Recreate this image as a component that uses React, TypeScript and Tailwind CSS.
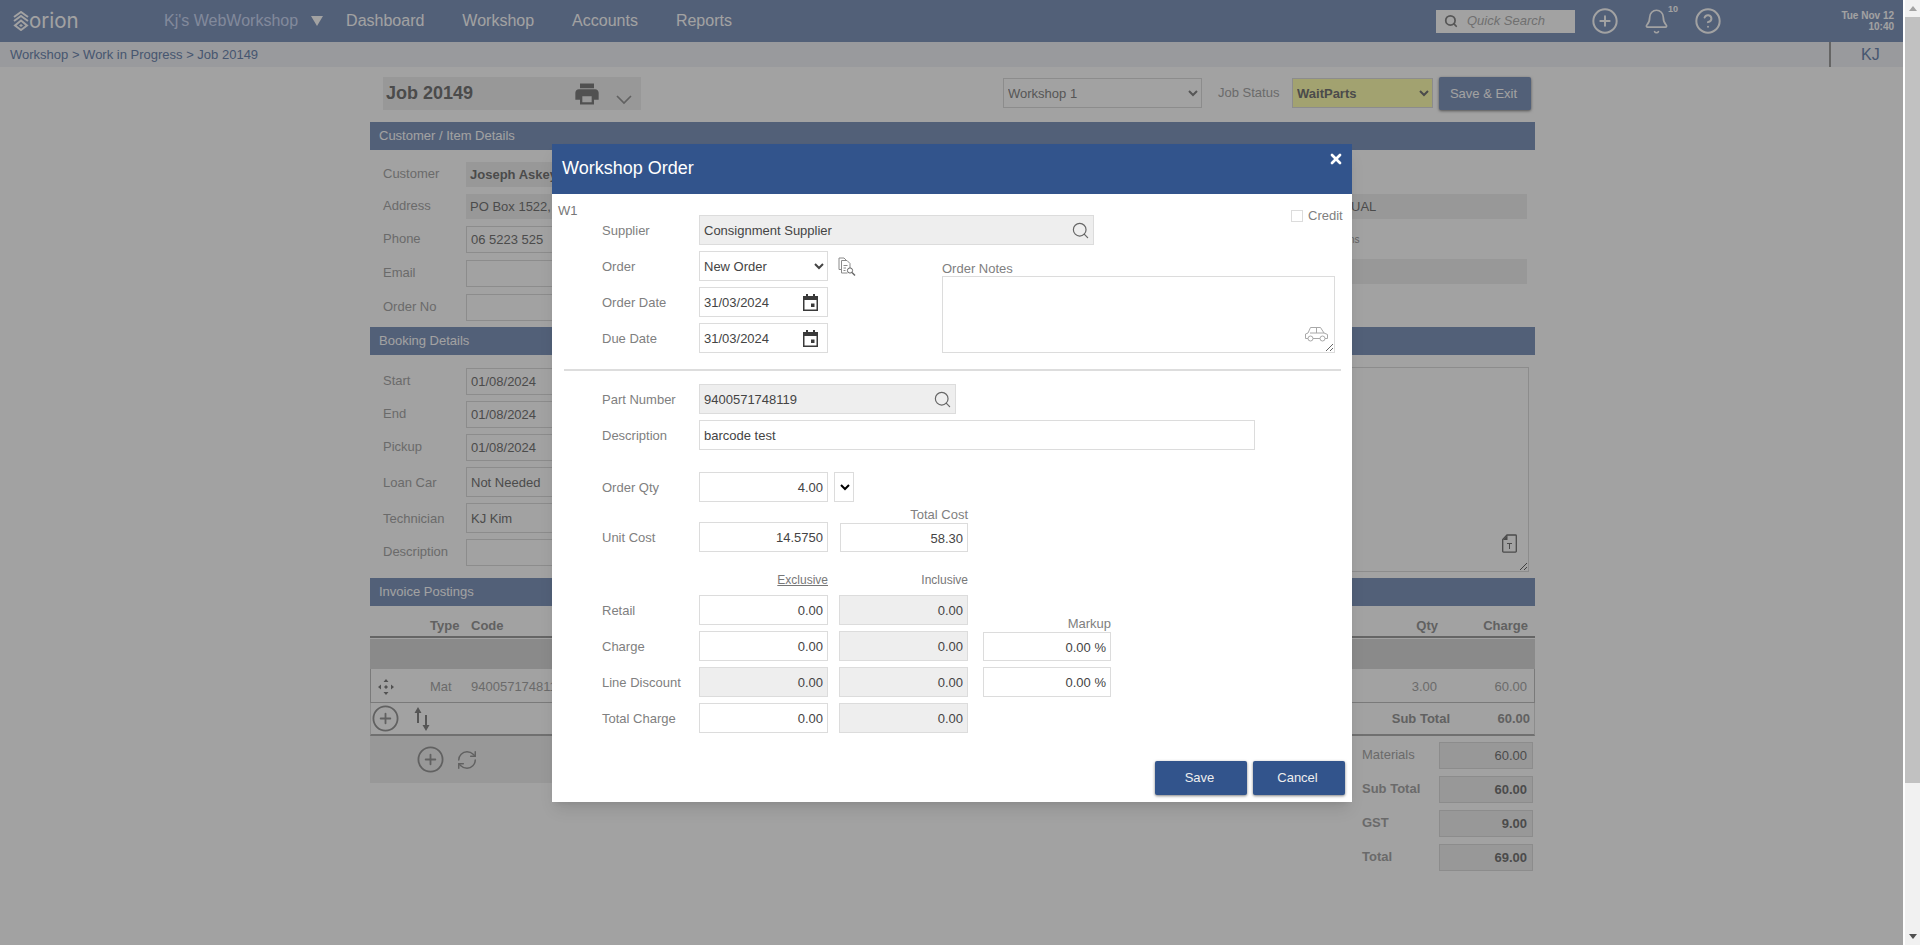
import React from 'react';
import { Bell, CircleHelp, CirclePlus, RefreshCw, Search, X } from 'lucide-react';

const Logo = () => (
  <svg width="16" height="20" viewBox="0 0 16 20" fill="none" stroke="#ffffff" strokeWidth="2">
    <path d="M1 6 L8 1 L15 6" />
    <path d="M1 10 L8 5 L15 10" />
    <path d="M8 9.500 L14 14.500 L8 19 L2 14.500 Z" />
    <path d="M8 13 L10 14.500 L8 16 L6 14.500 Z" fill="#ffffff" stroke="none" />
  </svg>
);

const Printer = () => (
  <svg width="28" height="28" viewBox="0 0 24 24" fill="#808080">
    <path d="M19 8H5c-1.66 0-3 1.34-3 3v6h4v4h12v-4h4v-6c0-1.66-1.34-3-3-3zm-3 11H8v-5h8v5zm-10-16h12v4H6z" />
  </svg>
);

const Calendar = () => (
  <svg width="15" height="17" viewBox="0 0 15 17" fill="none" className="-mt-[2px]">
    <path d="M3 0h2v2h5V0h2v2h3v15H0V2h3z" fill="#3a3a3a" />
    <rect x="1.500" y="6" width="12" height="9.500" fill="#fff" />
    <rect x="8" y="9.500" width="3.500" height="3.500" fill="#3a3a3a" />
  </svg>
);

const DocSearch = () => (
  <svg width="18" height="19" viewBox="0 0 18 19" fill="none" stroke="#8a8a8a" strokeWidth="1">
    <path d="M3.500 12.500H1V1h5l2 2" />
    <path d="M3.500 3.500h5.500l3 3v4.500M3.500 3.500v12.500h6" />
    <path d="M5.500 8.500h4M5.500 11h2.500M5.500 13.500h2" />
    <circle cx="12" cy="13.500" r="2.600" stroke="#666" />
    <path d="M14 15.500l3 3" stroke="#666" strokeWidth="1.400" />
  </svg>
);

const Car = () => (
  <svg width="25" height="16" viewBox="0 0 25 16" fill="none" stroke="#a8a8a8" strokeWidth="1">
    <path d="M4 12.500H1.500V8L4 7l2.500-5.500h10L20 7l3.500 1.500v4H21M16 12.500H9" />
    <path d="M6 7h14M12.500 1.500V7" />
    <circle cx="6.500" cy="12.500" r="2.500" />
    <circle cx="18.500" cy="12.500" r="2.500" />
  </svg>
);

const MoveIcon = () => (
  <svg width="16" height="16" viewBox="0 0 16 16" fill="#808080">
    <path d="M8 0l2.500 3h-5zM8 16l-2.500-3h5zM0 8l3-2.500v5zM16 8l-3 2.500v-5z" />
    <path d="M8 6l2 2-2 2-2-2z" />
  </svg>
);

const SortIcon = () => (
  <svg width="18" height="24" viewBox="0 0 18 24" fill="#888">
    <path d="M5 0l3.500 6H6v10H4V6H1.500z" />
    <path d="M13 24l-3.500-6H12V8h2v10h2.500z" />
  </svg>
);

const TextDoc = () => (
  <svg width="15" height="19" viewBox="0 0 15 19" fill="none" stroke="#777" strokeWidth="1.300">
    <path d="M5 1h8.500a.8.8 0 0 1 .8.800v15.500a.8.8 0 0 1-.8.800H1.500a.8.8 0 0 1-.8-.8V5.500z" />
    <path d="M1 6h4.500V1z" fill="#777" stroke="none" />
    <path d="M5 9.500h5M7.500 9.500v5.500" strokeWidth="1" />
  </svg>
);

// modal input look: 1px light border, optionally greyed, text left or right
function Field({ className = '', gray = false, right = false, children }: { className?: string; gray?: boolean; right?: boolean; children?: React.ReactNode }) {
  return (
    <div className={`flex h-[30px] shrink-0 items-center border border-[#dcdcdc] px-[4px] pt-[2px] text-[13px] text-[#444] ${gray ? 'bg-[#eeeeee]' : 'bg-white'} ${right ? 'justify-end' : ''} ${className}`}>
      {children}
    </div>
  );
}

function Row({ label, children, className = '' }: { label: string; children: React.ReactNode; className?: string }) {
  return (
    <div className={`flex items-center ${className}`}>
      <div className="w-[97px] shrink-0 pt-[2px] text-[13px] text-[#808080]">{label}</div>
      {children}
    </div>
  );
}

function SearchField({ className, children }: { className: string; children: React.ReactNode }) {
  return (
    <Field gray className={`justify-between pr-[3px] ${className}`}>
      <span>{children}</span>
      <Search size={19} strokeWidth={1.5} className="-mt-[2px] text-[#666]" />
    </Field>
  );
}

function WorkshopOrder() {
  return (
    <div className="absolute left-[552px] top-[144px] flex h-[658px] w-[800px] flex-col bg-white shadow-lg">
      <div className="flex h-[50px] shrink-0 items-start justify-between bg-[#32548c] pl-[10px] pr-[8px]">
        <div className="-mt-[2px] self-center text-[18px] text-white">Workshop Order</div>
        <X size={16} strokeWidth={4} className="mt-[7px] text-white" />
      </div>

      <div className="flex pl-[6px] pt-[21px]">
        <div className="-mt-[14px] w-[44px] shrink-0 text-[13px] text-[#777]">W1</div>
        <div className="flex-1">
          <div className="flex items-start">
            <Row label="Supplier">
              <SearchField className="w-[395px]">Consignment Supplier</SearchField>
            </Row>
            <div className="-mt-[9px] ml-[197px] flex items-center text-[13px] text-[#808080]">
              <div className="mr-[5px] h-[12px] w-[12px] border border-[#dcdcdc]" />
              Credit
            </div>
          </div>
          <div className="mt-[6px] flex">
            <div className="flex w-[340px] shrink-0 flex-col gap-[6px]">
              <Row label="Order">
                <select className="h-[30px] w-[129px] border border-[#dcdcdc] bg-white text-[13px] text-[#444]">
                  <option>New Order</option>
                </select>
                <div className="ml-[10px]"><DocSearch /></div>
              </Row>
              <Row label="Order Date">
                <Field className="w-[129px] justify-between pr-[9px]">31/03/2024<Calendar /></Field>
              </Row>
              <Row label="Due Date">
                <Field className="w-[129px] justify-between pr-[9px]">31/03/2024<Calendar /></Field>
              </Row>
            </div>
            <div className="w-[393px] pt-[10px]">
              <div className="h-[15px] text-[13px] leading-[16px] text-[#808080]">Order Notes</div>
              <div className="relative h-[77px]">
                <textarea className="block h-[77px] w-[393px] border border-[#dcdcdc] bg-white" />
                <div className="absolute bottom-[11px] right-[6px]"><Car /></div>
              </div>
            </div>
          </div>
        </div>
      </div>

      <div className="ml-[12px] mt-[16px] h-[2px] w-[777px] bg-[#dddddd]" />

      <div className="pl-[50px]">
        <Row label="Part Number" className="mt-[13px]">
          <SearchField className="w-[257px]">9400571748119</SearchField>
        </Row>
        <Row label="Description" className="mt-[6px]">
          <Field className="w-[556px]">barcode test</Field>
        </Row>
        <Row label="Order Qty" className="mt-[22px]">
          <Field right className="w-[129px]">4.00</Field>
          <select className="ml-[6px] h-[30px] w-[20px] border border-[#dcdcdc] bg-white text-[13px]">
            <option></option>
          </select>
        </Row>
        <div className="mt-[5px] flex h-[45px] items-end">
          <div className="flex h-[30px] w-[97px] items-center pt-[2px] text-[13px] text-[#808080]">Unit Cost</div>
          <Field right className="w-[129px]">14.5750</Field>
          <div className="ml-[12px] w-[128px]">
            <div className="text-right text-[13px] leading-[16px] text-[#808080]">Total Cost</div>
            <Field right className="!h-[29px] w-[128px]">58.30</Field>
          </div>
        </div>
        <div className="mt-[20px] flex text-[12px] leading-[16px] text-[#777]">
          <div className="w-[97px]" />
          <div className="w-[129px] text-right underline">Exclusive</div>
          <div className="ml-[11px] w-[129px] text-right">Inclusive</div>
        </div>
        <Row label="Retail" className="mt-[7px]">
          <Field right className="w-[129px]">0.00</Field>
          <Field gray right className="ml-[11px] w-[129px]">0.00</Field>
          <div className="-mb-[28px] ml-[15px] w-[128px] text-right text-[13px] leading-[16px] text-[#808080]">Markup</div>
        </Row>
        <Row label="Charge" className="mt-[6px]">
          <Field right className="w-[129px]">0.00</Field>
          <Field gray right className="ml-[11px] w-[129px]">0.00</Field>
          <Field right className="ml-[15px] mt-px !h-[29px] w-[128px]">0.00 %</Field>
        </Row>
        <Row label="Line Discount" className="mt-[6px]">
          <Field gray right className="w-[129px]">0.00</Field>
          <Field gray right className="ml-[11px] w-[129px]">0.00</Field>
          <Field right className="ml-[15px] w-[128px]">0.00 %</Field>
        </Row>
        <Row label="Total Charge" className="mt-[6px]">
          <Field right className="w-[129px]">0.00</Field>
          <Field gray right className="ml-[11px] w-[129px]">0.00</Field>
        </Row>
      </div>

      <div className="mt-[28px] flex justify-end gap-[6px] pr-[7px]">
        <button className="h-[34px] w-[92px] rounded-[2px] bg-[#32548c] pr-[3px] text-[13px] text-[#eeeeee] shadow-[0_1px_3px_rgba(0,0,0,0.5)]">Save</button>
        <button className="h-[34px] w-[92px] rounded-[2px] bg-[#32548c] pr-[3px] text-[13px] text-[#eeeeee] shadow-[0_1px_3px_rgba(0,0,0,0.5)]">Cancel</button>
      </div>
    </div>
  );
}

function SectionHead({ children }: { children: React.ReactNode }) {
  return <div className="flex h-[28px] items-center bg-[#8297be] pl-[9px] text-[13px] text-[#ffffff]">{children}</div>;
}

// page form row behind the dialog
function PageRow({ label, h, box = false, bold = false, children }: { label: string; h: string; box?: boolean; bold?: boolean; children?: React.ReactNode }) {
  const tall = h === 'h-[30px]';
  return (
    <div className="flex items-center">
      <div className={`w-[83px] text-[13px] text-[#a8a8a8] ${tall ? 'mt-[1px]' : '-mt-[2px]'}`}>{label}</div>
      <div className={`flex w-[300px] items-center px-[4px] text-[13px] text-[#777] ${h} ${tall ? 'pt-[2px]' : ''} ${box ? 'bg-[#f0f0f0]' : 'border border-[#dcdcdc]'} ${bold ? 'font-bold' : ''}`}>
        {children}
      </div>
    </div>
  );
}

function Totals({ label, value, bold = false }: { label: string; value: string; bold?: boolean }) {
  return (
    <div className="flex items-center">
      <div className={`-mt-[2px] w-[77px] text-[13px] text-[#a8a8a8] ${bold ? 'font-bold' : ''}`}>{label}</div>
      <div className={`flex h-[27px] w-[94px] items-center justify-end border border-[#dcdcdc] bg-[#f0f0f0] pr-[5px] text-[13px] text-[#777] ${bold ? 'font-bold' : ''}`}>{value}</div>
    </div>
  );
}

function Page() {
  return (
    <div>
      <div className="flex h-[42px] items-center bg-[#8297be] pl-[13px] text-[16px] text-white">
        <Logo />
        <div className="w-[135px] font-['Inter',sans-serif] text-[20.5px] text-[#ffffff]">orion</div>
        <div className="whitespace-nowrap text-[16px] text-[#cdd9f4]">Kj's WebWorkshop</div>
        <svg width="12" height="10" viewBox="0 0 12 10" className="ml-[13px] shrink-0" fill="#ffffff"><path d="M0 0h12L6 10z" /></svg>
        <div className="ml-[23px]">Dashboard</div>
        <div className="ml-[38px]">Workshop</div>
        <div className="ml-[38px]">Accounts</div>
        <div className="ml-[38px]">Reports</div>

        <div className="ml-[704px] flex h-[23px] w-[139px] shrink-0 items-center bg-white pl-[8px] text-[13px] italic text-[#b0b0b0]">
          <Search size={14} strokeWidth={3} className="mr-[9px] text-[#888]" />
          Quick Search
        </div>
        <CirclePlus size={28} strokeWidth={1.7} className="ml-[16px] shrink-0 text-white" />
        <div className="relative ml-[24px]">
          <Bell size={27} strokeWidth={1.5} className="text-white" />
          <span className="absolute -right-[8px] -top-[5px] text-[9px] font-bold text-white">10</span>
        </div>
        <CircleHelp size={28} strokeWidth={1.7} className="ml-[24px] shrink-0 text-white" />
        <div className="ml-auto whitespace-nowrap pr-[9px] text-right text-[10px] font-bold leading-[11px] text-white">
          <div>Tue Nov 12</div>
          <div>10:40</div>
        </div>
      </div>

      <div className="flex h-[25px] items-center bg-[#f1f2f7] pl-[10px] text-[13px] text-[#6f88b0]">
        Workshop &gt; Work in Progress &gt; Job 20149
        <div className="ml-auto flex h-[25px] w-[74px] items-center border-l-2 border-[#a0a0a0] pl-[30px] text-[16px]">KJ</div>
      </div>

      <div className="ml-[370px] w-[1165px]">
        <div className="mt-[10px] flex items-start">
          <div className="ml-[13px] flex h-[33px] w-[258px] items-center bg-[#f0f0f0] pl-[3px] text-[18px] font-bold text-[#777]">
            <span className="w-[187px]">Job 20149</span>
            <Printer />
            <svg width="16" height="10" viewBox="0 0 16 10" className="ml-[15px] mt-[12px]" fill="none" stroke="#999" strokeWidth="1.700"><path d="M1 1l7 7 7-7" /></svg>
          </div>
          <select className="ml-[362px] mt-px h-[30px] w-[199px] border border-[#dcdcdc] text-[13px] text-[#888]">
            <option>Workshop 1</option>
          </select>
          <div className="ml-[16px] mt-px flex h-[30px] w-[74px] items-center text-[13px] text-[#a8a8a8]">Job Status</div>
          <select className="mt-px h-[30px] w-[141px] border border-[#dcdcdc] bg-[#ffffb0] text-[13px] font-bold text-[#777]">
            <option>WaitParts</option>
          </select>
          <button className="ml-[6px] h-[33px] w-[92px] rounded-[2px] bg-[#8297be] pr-[3px] text-[13px] text-white shadow-[0_1px_3px_rgba(0,0,0,0.5)]">Save &amp; Exit</button>
        </div>

        <div className="mt-[12px]"><SectionHead>Customer / Item Details</SectionHead></div>
        <div className="flex h-[177px] justify-between pl-[13px]">
          <div className="pt-[12px]">
            <PageRow label="Customer" h="h-[25px]" box bold>Joseph Askey</PageRow>
            <div className="mt-[7px]"><PageRow label="Address" h="h-[25px]" box>PO Box 1522,</PageRow></div>
            <div className="mt-[7px]"><PageRow label="Phone" h="h-[27px]">06 5223 525</PageRow></div>
            <div className="mt-[7px]"><PageRow label="Email" h="h-[27px]" /></div>
            <div className="mt-[7px]"><PageRow label="Order No" h="h-[27px]" /></div>
          </div>
          <div className="mr-[8px] w-[187px] pt-[44px] text-[13px] text-[#777]">
            <div className="flex h-[25px] items-center bg-[#f0f0f0] pl-[11px]">UAL</div>
            <div className="mt-[15px] pl-[9px] text-[10px] leading-[12px] text-[#999]">ns</div>
            <div className="mt-[13px] h-[25px] bg-[#f0f0f0]" />
          </div>
        </div>

        <SectionHead>Booking Details</SectionHead>
        <div className="flex h-[223px] justify-between pl-[13px]">
          <div className="flex flex-col gap-[6px] pt-[13px]">
            <PageRow label="Start" h="h-[27px]">01/08/2024</PageRow>
            <PageRow label="End" h="h-[27px]">01/08/2024</PageRow>
            <PageRow label="Pickup" h="h-[27px]">01/08/2024</PageRow>
            <PageRow label="Loan Car" h="h-[30px]">Not Needed</PageRow>
            <PageRow label="Technician" h="h-[30px]">KJ Kim</PageRow>
            <PageRow label="Description" h="h-[27px]" />
          </div>
          <div className="relative mr-[6px] mt-[12px] h-[205px] w-[329px]">
            <textarea className="block h-[205px] w-[329px] border border-[#dcdcdc]" />
            <div className="absolute bottom-[19px] right-[12px]"><TextDoc /></div>
          </div>
        </div>

        <SectionHead>Invoice Postings</SectionHead>
        <div className="flex h-[32px] items-end border-b-2 border-[#a0a0a0] pb-[1px] text-[13px] font-bold text-[#999]">
          <div className="ml-[60px] w-[41px]">Type</div>
          <div className="flex-1">Code</div>
          <div>Qty</div>
          <div className="mr-[7px] w-[90px] text-right">Charge</div>
        </div>
        <div className="mt-px h-[30px] bg-[#d9d9d9]" />
        <div className="flex h-[34px] items-center border-x border-b border-[#c0c0c0] pt-[2px] text-[13px] text-[#a8a8a8]">
          <div className="ml-[7px] w-[52px]"><MoveIcon /></div>
          <div className="w-[41px]">Mat</div>
          <div className="flex-1">9400571748119</div>
          <div>3.00</div>
          <div className="mr-[7px] w-[90px] text-right">60.00</div>
        </div>
        <div className="flex h-[33px] items-center border-x border-b-2 border-x-[#dcdcdc] border-b-[#b0b0b0] text-[13px] font-bold text-[#999]">
          <CirclePlus size={29} strokeWidth={1.5} className="text-[#999]" />
          <div className="ml-[13px]"><SortIcon /></div>
          <div className="ml-auto">Sub Total</div>
          <div className="mr-[4px] w-[80px] text-right">60.00</div>
        </div>
        <div className="flex justify-between">
          <div className="flex h-[47px] w-[500px] items-center bg-[#f0f0f0] pl-[46px]">
            <CirclePlus size={29} strokeWidth={1.5} className="text-[#999]" />
            <RefreshCw size={22} strokeWidth={1.6} className="ml-[11px] text-[#999]" />
          </div>
          <div className="mr-[2px] flex flex-col gap-[7px] pt-[6px]">
            <Totals label="Materials" value="60.00" />
            <Totals label="Sub Total" value="60.00" bold />
            <Totals label="GST" value="9.00" bold />
            <Totals label="Total" value="69.00" bold />
          </div>
        </div>
      </div>
    </div>
  );
}

function Scrollbar() {
  return (
    <div className="flex w-[15px] shrink-0 flex-col bg-[#f1f1f1]">
      <div className="flex h-[17px] items-center justify-center">
        <svg width="8" height="5" viewBox="0 0 8 5" fill="#a3a3a3"><path d="M4 0l4 5H0z" /></svg>
      </div>
      <div className="h-[766px] bg-[#c1c1c1]" />
      <div className="flex-1" />
      <div className="flex h-[17px] items-center justify-center">
        <svg width="8" height="5" viewBox="0 0 8 5" fill="#505050"><path d="M4 5L0 0h8z" /></svg>
      </div>
    </div>
  );
}

export default function App() {
  return (
    <div className="flex h-[945px] w-[1920px] overflow-hidden bg-white font-['Liberation_Sans',Arial,sans-serif]">
      <div className="relative w-[1903px] shrink-0">
        <Page />
        <div className="absolute inset-0 bg-black/[0.365]" />
        <WorkshopOrder />
      </div>
      <div className="w-[2px] shrink-0 bg-white" />
      <Scrollbar />
    </div>
  );
}
